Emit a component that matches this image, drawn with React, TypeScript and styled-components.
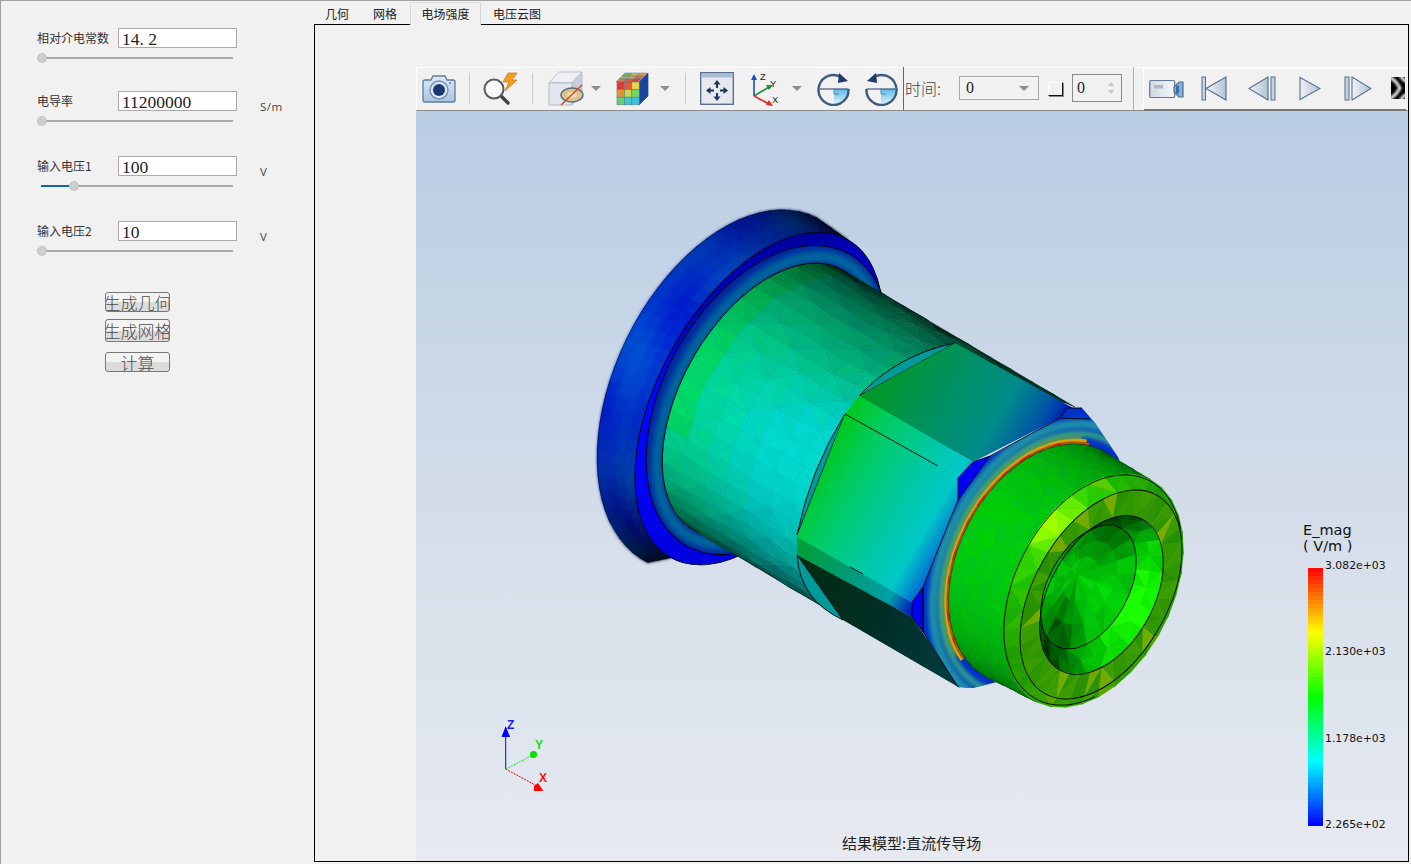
import React from 'react';
import styled, { createGlobalStyle } from 'styled-components';

const Global = createGlobalStyle`
  html, body { margin: 0; padding: 0; height: 100%; background: #f1f1f1; overflow: hidden; }
  #root { height: 100%; }
`;
const CJK = `"Noto Sans CJK SC", "Noto Sans", sans-serif`;
const SERIF = `"Liberation Serif", "Noto Sans CJK SC", serif`;

const Root = styled.div`
  width: 1411px; height: 864px; box-sizing: border-box; display: flex;
  background: #f1f1f1; border-top: 1px solid #a0a0a0; border-left: 1px solid #a0a0a0;
  font-family: ${CJK}; color: #333;
`;
const Panel = styled.div`
  width: 313px; flex: none; box-sizing: border-box; padding: 27px 0 0 36px; display: flex; flex-direction: column;
`;
const Param = styled.div<{ $mt: number }>`
  margin-top: ${p => p.$mt}px; display: grid; grid-template-columns: 81px 119px auto; grid-template-rows: 20px 16px;
  align-items: center; width: 250px;
`;
const Label = styled.span`font-size: 12px; line-height: 20px; color: #333; white-space: nowrap;`;
const Field = styled.input`
  box-sizing: border-box; width: 119px; height: 20px; border: 1px solid #aaa; background: #fff; padding: 2px 3px 0;
  font: 17.5px/18px ${SERIF}; color: #222; outline: none; margin: 0;
`;
const Unit = styled.span`font: 11.5px "Open Sans", sans-serif; color: #444; margin-left: 23px; letter-spacing: .5px; position: relative; top: 5px;`;
const Slider = styled.div`grid-column: 1 / 3; position: relative; height: 16px; width: 196px; display: flex; align-items: center;`;
const Track = styled.div`height: 2px; width: 192px; margin-left: 4px; background: #a8a8a8; margin-top: 4px;`;
const Fill = styled.div`position: absolute; left: 4px; top: 9px; height: 2px; background: #1464b4;`;
const Thumb = styled.div`position: absolute; top: 5px; width: 10px; height: 10px; border-radius: 50%; background: #cdcdcd; border: 1px dotted #bbb; box-sizing: border-box;`;
const Buttons = styled.div`display: flex; flex-direction: column; margin: 35px 0 0 68px; align-items: flex-start;`;
const Btn = styled.div<{ $h: number; $mt: number }>`
  box-sizing: border-box; width: 65px; height: ${p => p.$h}px; margin-top: ${p => p.$mt}px; border: 1px solid #777; border-radius: 3px;
  background: linear-gradient(#f3f3f3 0 50%, #dcdcdc 50% 100%); display: flex; justify-content: center; align-items: center;
  overflow: hidden; white-space: nowrap; font: 300 17px/1 ${CJK}; color: #4c4c4c; flex: none;
`;
const Right = styled.div`flex: 1; display: flex; flex-direction: column; margin: 1px 2px 2px 0; min-width: 0;`;
const Tabs = styled.div`display: flex; height: 22px; margin-left: -1px; position: relative; z-index: 1;`;
const Tab = styled.div<{ $active?: boolean }>`
  box-sizing: border-box; padding: 0 ${p => (p.$active ? 10.5 : 12)}px; height: ${p => (p.$active ? 23 : 22)}px; font-size: 12px; line-height: 24px; color: #222;
  margin-left: ${p => (p.$active ? 1 : 0)}px;
  ${p => p.$active ? 'border: 1px solid #d9d9d9; border-bottom: none; background: #f1f1f1; line-height: 22px;' : ''}
`;
const Frame = styled.div`
  flex: 1; border: 1px solid #000; padding: 42px 0 0 101px; display: flex; flex-direction: column; min-height: 0;
`;
const Toolbar = styled.div`
  height: 44px; flex: none; display: flex; align-items: stretch; box-sizing: border-box; padding-bottom: 1px;
  border-top: 1px solid #fff; border-left: 1px solid #fff; border-bottom: 1px solid #8a8a8a; background: #f1f1f1; position: relative;
`;
const Slot = styled.div<{ $w: number; $ml?: number }>`
  width: ${p => p.$w}px; margin-left: ${p => p.$ml ?? 0}px; flex: none; display: flex; align-items: center; justify-content: center;
`;
const Sep = styled.div<{ $ml: number; $mr: number }>`
  width: 1px; flex: none; margin: 5px ${p => p.$mr}px 5px ${p => p.$ml}px; background: #c8c8c8;
`;
const Divider = styled.div<{ $c: string; $ml: number; $mr: number }>`
  width: 1px; flex: none; background: ${p => p.$c}; margin: -1px ${p => p.$mr}px -1px ${p => p.$ml}px;
`;
const TimeLabel = styled.span`font: 300 16px/40px ${CJK}; color: #444; margin-left: 1px; width: 54px; flex: none; white-space: nowrap;`;
const Combo = styled.div`
  box-sizing: border-box; width: 80px; height: 24px; margin-top: 8px; border: 1px solid #a8a8a8; flex: none; display: flex; align-items: center;
  justify-content: space-between; padding: 0 9px 0 6px; font: 16px ${SERIF}; color: #222;
`;
const Caret = styled.div`width: 0; height: 0; border-left: 5px solid transparent; border-right: 5px solid transparent; border-top: 5px solid #8c8c8c;`;
const Mini = styled.div`
  box-sizing: border-box; width: 15px; height: 14px; margin: 14px 0 0 9px; flex: none;
  border-right: 1px solid #111; border-bottom: 1px solid #111; border-left: 1px solid #fff; border-top: 1px solid #fff;
  box-shadow: 1px 1px 0 #8a8a8a;
`;
const Spin = styled.div`
  box-sizing: border-box; width: 50px; height: 28px; margin: 6px 0 0 9px; border: 1px solid #8a8a8a; flex: none; display: flex; align-items: center;
  justify-content: space-between; padding: 0 7px 0 4px; font: 16px ${SERIF}; color: #222;
`;
const SpinArrows = styled.div`display: flex; flex-direction: column; gap: 4px;`;
const Tri = styled.div<{ $up?: boolean }>`
  width: 0; height: 0; border-left: 3px solid transparent; border-right: 3px solid transparent;
  ${p => p.$up ? 'border-bottom: 4px solid #c4c4c4;' : 'border-top: 4px solid #c4c4c4;'}
`;
const Player = styled.div`
  flex: 1; display: flex; align-items: center; box-sizing: border-box; margin-right: 2px; border-left: 1px solid #fff; border-top: 1px solid #fff;
  border-bottom: 2px solid #777; margin-bottom: -2px; padding-bottom: 2px; overflow: hidden;
`;
const Canvas = styled.div`
  flex: 1; position: relative; overflow: hidden; background: linear-gradient(#b9cde3 0%, #d3dde9 52%, #e7eaf0 100%);
`;
const Model = styled.svg`position: absolute; left: 0; top: 0;`;
const Gizmo = styled.svg`position: absolute; left: 80px; top: 600px;`;
const Legend = styled.div`position: absolute; left: 887px; top: 411px; color: #111;`;
const LegendTitle = styled.div`font: 14.5px/16px "DejaVu Sans", sans-serif; white-space: pre; margin-bottom: 5px;`;
const LegendBody = styled.div`display: flex; margin-left: 5px;`;
const Bar = styled.svg`margin-top: 9px; flex: none; display: block;`;
const Ticks = styled.div`height: 273px; margin-left: 2px; display: flex; flex-direction: column; justify-content: space-between; font: 10.85px/14px "DejaVu Sans", sans-serif; color: #111;`;
const Caption = styled.div`position: absolute; left: 426px; top: 722px; font-size: 15px; line-height: 20px; color: #222; white-space: nowrap;`;

/* ---------- model geometry ---------- */
type E = { cx: number; cy: number; a: number; b: number; th: number };
type Tri3 = { p: string; f: string };
const D2R = Math.PI / 180;
const pt = (e: E, phi: number): [number, number] => {
  const t = e.th * D2R, f = phi * D2R;
  const x = e.a * Math.cos(f), y = e.b * Math.sin(f);
  return [e.cx + x * Math.cos(t) - y * Math.sin(t), e.cy + x * Math.sin(t) + y * Math.cos(t)];
};
const lerpE = (p: E, q: E, u: number): E => ({
  cx: p.cx + (q.cx - p.cx) * u, cy: p.cy + (q.cy - p.cy) * u, a: p.a + (q.a - p.a) * u, b: p.b + (q.b - p.b) * u, th: p.th + (q.th - p.th) * u,
});
const scaleE = (e: E, s: number): E => ({ ...e, a: e.a * s, b: e.b * s });
const h = (i: number, j: number, k = 0) => { const x = Math.sin(i * 127.1 + j * 311.7 + k * 74.7) * 43758.5453; return x - Math.floor(x); };
const clamp01 = (x: number) => Math.max(0, Math.min(1, x));
const jet = (t: number): [number, number, number] => {
  const c = clamp01(t) * 4, seg = Math.min(3, Math.floor(c)), f = c - seg;
  if (seg === 0) return [0, 255 * f, 255];
  if (seg === 1) return [0, 255, 255 * (1 - f)];
  if (seg === 2) return [255 * f, 255, 0];
  return [255, 255 * (1 - f), 0];
};
const col = (t: number, br: number) => { const [r, g, b] = jet(t); const q = Math.min(1, br); return `rgb(${Math.round(r * q)},${Math.round(g * q)},${Math.round(b * q)})`; };
const angDist = (a: number, c: number) => { const d = Math.abs(a - c) % 360; return d > 180 ? 360 - d : d; };
const bump = (a: number, c: number, w: number) => { const d = angDist(a, c); return d < w ? 1 - d / w : 0; };
const mesh = (e0: E, e1: E, nu: number, nv: number, p0: number, p1: number, jit: number, fn: (u: number, s: number, r: number) => string): Tri3[] => {
  const g: [number, number][][] = [];
  for (let i = 0; i <= nu; i++) {
    const row: [number, number][] = [];
    const e = lerpE(e0, e1, i / nu);
    for (let j = 0; j <= nv; j++) {
      const [x, y] = pt(e, p0 + (p1 - p0) * j / nv);
      const edge = i === 0 || i === nu || j === 0 || j === nv;
      row.push(edge ? [x, y] : [x + (h(i, j, 1) - .5) * jit, y + (h(i, j, 2) - .5) * jit]);
    }
    g.push(row);
  }
  const out: Tri3[] = [];
  const P = (a: [number, number]) => `${a[0].toFixed(1)},${a[1].toFixed(1)}`;
  for (let i = 0; i < nu; i++) for (let j = 0; j < nv; j++) {
    const flip = (i + j) % 2 === 0;
    const a = g[i][j], b = g[i + 1][j], c = g[i + 1][j + 1], d = g[i][j + 1];
    const T = flip ? [[a, b, c], [a, c, d]] : [[a, b, d], [b, c, d]];
    T.forEach((t, k) => {
      const u = (i + .5 + (k ? -.15 : .15)) / nu, s = (j + .5 + (k ? .15 : -.15)) / nv;
      out.push({ p: t.map(P).join(' '), f: fn(u, s, h(i, j, k + 5)) });
    });
  }
  return out;
};
const arc = (e: E, p0: number, p1: number) => {
  const pts: string[] = [];
  for (let k = 0; k <= 60; k++) { const [x, y] = pt(e, p0 + (p1 - p0) * k / 60); pts.push(`${x.toFixed(1)},${y.toFixed(1)}`); }
  return pts.join(' ');
};

const F: E = { cx: 732, cy: 390, a: 192, b: 117, th: -64 };
const R1: E = { cx: 759, cy: 398.5, a: 182, b: 100, th: -61 };
const R2: E = { cx: 768, cy: 400, a: 167, b: 104, th: -61 };
const D: E = { cx: 768, cy: 400, a: 150, b: 86, th: -60 };
const D1: E = { cx: 1000, cy: 537, a: 150, b: 86, th: -60 };
const S: E = { cx: 1045, cy: 564, a: 127, b: 86, th: -63 };
const A2: E = { cx: 1093, cy: 590.5, a: 125, b: 79, th: -63 };
const A: E = { cx: 1093, cy: 590, a: 123, b: 78, th: -63 };
const B: E = { cx: 1101, cy: 594.5, a: 114, b: 67, th: -60.5 };
const C: E = { cx: 1101.5, cy: 595, a: 86, b: 52, th: -61 };
const Eb: E = { cx: 1088.5, cy: 587, a: 67, b: 40, th: -61 };
const Apex: E = { cx: 1077, cy: 575, a: 2, b: 2, th: -61 };

const flangeMesh = mesh(F, R1, 4, 40, 180, 360, 0, (u, s) => {
  const sn = Math.pow(Math.sin(Math.PI * s), .8);
  const wob = .5 + .5 * Math.sin(s * 21 + u * 3) * Math.cos(s * 8 - u * 2);
  return col(.035 + wob * .06, .08 + .74 * sn);
});
const bodyMesh = mesh(D, D1, 11, 24, 180, 360, 3.5, (u, s, r) => {
  const sn = Math.pow(Math.sin(Math.PI * Math.pow(s, .85)), 1.0);
  const edge = u < .06 && s > .32 ? .05 : 0;
  const f = clamp01((.66 - s) / .2);
  const toNut = f * Math.max(0, u - .1) * .22;
  const t = Math.max(.262, .33 - toNut + edge + (r - .5) * .016);
  return col(t, .11 + .74 * sn + (r - .5) * .025);
});
const tailMesh = mesh(S, A2, 6, 30, 180, 360, 2, (u, s, r) => {
  const sn = Math.pow(Math.sin(Math.PI * s), .6);
  const t = .48 + (r - .5) * .025;
  return col(t, .3 + .5 * sn + (r - .5) * .04);
});
const ringAB = mesh(A2, B, 1, 34, 0, 360, 0, (u, s, r) => {
  const a = s * 360;
  const lime = bump(a, 289, 70);
  const peak = bump(a, 289, 24);
  const olive = bump(a, 150, 70);
  const t = .55 + olive * .035 + peak * .11 + (r - .5) * .03 + (r > .9 ? .05 : 0);
  return col(t, .62 + lime * .3 + peak * .1 + (r - .5) * .06);
});
const ringBC = mesh(B, C, 1, 34, 0, 360, 0, (u, s, r) => {
  const spot = r > .86 ? .07 : 0;
  const t = .585 + (r - .5) * .035 + spot;
  return col(t, .6 + (r - .5) * .07 + spot * .6);
});
const wall = mesh(C, Eb, 2, 26, 0, 360, 0, (u, s, r) => {
  const a = s * 360;
  const lit = bump(a, 85, 85);
  const dark = Math.max(bump(a, 200, 55), bump(a, 333, 55));
  return col(.49 + lit * .035 + (r - .5) * .02, .62 + lit * .42 - dark * .4 + (r - .5) * .12);
});
const back = mesh(Eb, Apex, 3, 18, 0, 360, 0, (u, s, r) => {
  const a = s * 360;
  const rim = 1 - u;
  return col(.49, .74 + bump(a, 90, 60) * .08 - rim * (bump(a, 345, 70) * .42 + bump(a, 185, 55) * .5) + (r - .5) * .12);
});

const Tris = ({ t }: { t: Tri3[] }) => <g>{t.map((x, i) => <polygon key={i} points={x.p} fill={x.f} stroke={x.f} strokeWidth={0.5} />)}</g>;
const Oval = ({ e, ...rest }: { e: E } & React.SVGProps<SVGEllipseElement>) => (
  <ellipse cx={e.cx} cy={e.cy} rx={e.a} ry={e.b} transform={`rotate(${e.th} ${e.cx} ${e.cy})`} {...rest} />
);
const HEX = '1060,418 1067,408 1082,408 1095,423 1118,457 1135,500 1100,650 997,682 973,688 958,687 923,632 912,617 912,602 923,587 958,500 958,478 973,462 993,455';

const ModelArt = () => (
  <Model width={992} height={750} viewBox="416 111 992 750">
    <defs>
      <filter id="b07"><feGaussianBlur stdDeviation=".7" /></filter>
      <filter id="b1" x="-5%" y="-5%" width="110%" height="110%"><feGaussianBlur stdDeviation="1.6" /></filter>
      <filter id="b2"><feGaussianBlur stdDeviation="2" /></filter>
      <filter id="b4"><feGaussianBlur stdDeviation="4" /></filter>
      <linearGradient id="band" gradientUnits="userSpaceOnUse" x1="640" y1="480" x2="880" y2="270">
        <stop offset="0" stopColor="#0000e0" /><stop offset=".5" stopColor="#0008ff" /><stop offset=".85" stopColor="#0000b8" /><stop offset="1" stopColor="#000078" />
      </linearGradient>
      <linearGradient id="topF" gradientUnits="userSpaceOnUse" x1="870" y1="365" x2="1045" y2="465">
        <stop offset="0" stopColor="#009a18" /><stop offset=".35" stopColor="#00925a" /><stop offset=".68" stopColor="#008c8a" /><stop offset=".88" stopColor="#0050a8" /><stop offset="1" stopColor="#0000c4" />
      </linearGradient>
      <linearGradient id="midF" gradientUnits="userSpaceOnUse" x1="815" y1="465" x2="965" y2="552">
        <stop offset="0" stopColor="#00c818" /><stop offset=".22" stopColor="#00cc60" /><stop offset=".55" stopColor="#00c8a8" /><stop offset=".74" stopColor="#00c8c8" /><stop offset=".88" stopColor="#0070d4" /><stop offset="1" stopColor="#0000e6" />
      </linearGradient>
      <linearGradient id="lowB" gradientUnits="userSpaceOnUse" x1="797" y1="540" x2="918" y2="610">
        <stop offset="0" stopColor="#00a030" /><stop offset=".4" stopColor="#009a70" /><stop offset=".78" stopColor="#00a0a8" /><stop offset="1" stopColor="#0000c0" />
      </linearGradient>
      <linearGradient id="lowD" gradientUnits="userSpaceOnUse" x1="810" y1="570" x2="950" y2="660">
        <stop offset="0" stopColor="#002a12" /><stop offset=".6" stopColor="#00302a" /><stop offset="1" stopColor="#003a3c" />
      </linearGradient>
      <clipPath id="annulus"><Oval e={R2} /></clipPath>
      <clipPath id="hexc"><polygon points={HEX} /></clipPath>
    </defs>

    <Tris t={flangeMesh} />
    <g filter="url(#b1)"><Tris t={flangeMesh} /></g>
    <polyline points={arc(F, 205, 345)} fill="none" stroke="#000" strokeOpacity=".55" strokeWidth="1" />
    <Oval e={R1} fill="url(#band)" />
    <Oval e={R1} fill="none" stroke="#000" strokeWidth=".9" />
    <Oval e={R2} fill="#0024a0" />
    <g clipPath="url(#annulus)">
      <Oval e={scaleE(D, 1.05)} fill="none" stroke="#009698" strokeOpacity=".85" strokeWidth="8" filter="url(#b4)" />
    </g>
    <Oval e={R2} fill="none" stroke="#000" strokeWidth=".9" />
    <Tris t={bodyMesh} />
    <polyline points={arc(D, 176, 372)} fill="none" stroke="#000" strokeWidth="1" />

    <path d="M859 396 Q897 355 955 343 L859 396Z" fill="#009a9a" stroke="#000" strokeWidth=".9" />
    <path d="M845 414 Q810 470 797 535 Z" fill="#009a9a" stroke="#000" strokeWidth=".9" />
    <path d="M797 555 Q800 600 843 620 Z" fill="#009a9a" stroke="#000" strokeWidth=".9" />
    <polygon points="955,343 1073,408 1060,418 973,462 859,396" fill="url(#topF)" />
    <polygon points="859,396 973,462 958,478 958,500 923,587 912,602 797,537 845,414" fill="url(#midF)" />
    <line x1="845" y1="414" x2="938" y2="466" stroke="#000" strokeWidth=".9" />
    <polygon points="797,537 912,602 912,617 797,555" fill="url(#lowB)" />
    <polygon points="797,555 912,617 960,688 843,620" fill="url(#lowD)" />
    <line x1="850" y1="567" x2="863" y2="574" stroke="#000" strokeWidth=".9" />

    <polygon points={HEX} fill="#0030c8" />
    <g clipPath="url(#hexc)">
      <Oval e={scaleE(S, 1.17)} fill="none" stroke="#1c90a8" strokeWidth="9" filter="url(#b2)" />
      <Oval e={scaleE(S, 1.09)} fill="none" stroke="#30a880" strokeWidth="6" filter="url(#b2)" />
      <polyline points={arc(scaleE(S, 1.05), 205, 345)} fill="none" stroke="#80b030" strokeWidth="4" filter="url(#b2)" />
      <polyline points={arc(scaleE(S, 1.03), 200, 348)} fill="none" stroke="#d0a800" strokeWidth="4" filter="url(#b07)" />
      <polyline points={arc(scaleE(S, 1.012), 200, 350)} fill="none" stroke="#b85000" strokeWidth="3" filter="url(#b07)" />
      <polyline points={arc(scaleE(S, 1.015), 210, 340)} fill="none" stroke="#d82000" strokeWidth="2.5" strokeDasharray="7 16 12 26" filter="url(#b07)" />
    </g>
    <polygon points="973,462 958,478 958,500 990,456" fill="#0000f4" stroke="#000" strokeWidth=".8" />
    <polygon points="912,602 923,587 923,632 912,617" fill="#0000f4" stroke="#000" strokeWidth=".8" />
    <polyline points="958,500 923,587 923,632 958,687" fill="none" stroke="#000" strokeWidth=".9" />
    <polyline points="990,456 1060,418 1067,408 1082,408" fill="none" stroke="#000" strokeWidth=".9" />
    <line x1="1060" y1="418" x2="1090" y2="419" stroke="#000" strokeWidth=".9" />
    <Oval e={S} fill="#00b000" stroke="#111" strokeWidth="1.2" />
    <Tris t={tailMesh} />
    <Tris t={ringAB} />
    <polyline points={arc(A, 140, 400)} fill="none" stroke="#000" strokeWidth=".9" />
    <Tris t={ringBC} />
    <Oval e={B} fill="none" stroke="#000" strokeWidth=".9" />
    <Tris t={wall} />
    <Tris t={back} />
    <Oval e={C} fill="none" stroke="#000" strokeWidth=".9" />
    <Oval e={Eb} fill="none" stroke="#000" strokeWidth=".9" />
  </Model>
);

const GizmoArt = () => (
  <Gizmo width={70} height={80} viewBox="496 711 70 80">
    <line x1="505.7" y1="769" x2="505.7" y2="733" stroke="#0000ff" strokeWidth="1" />
    <polygon points="505.7,726 510,737 501.5,737" fill="#0000ff" />
    <line x1="505.7" y1="769" x2="533" y2="755" stroke="#00ff00" strokeWidth="1" strokeDasharray="2 1" />
    <circle cx="533.5" cy="754.5" r="3.5" fill="#00e000" />
    <line x1="505.7" y1="769" x2="537" y2="786" stroke="#ff0000" strokeWidth="1" strokeDasharray="2 1" />
    <polygon points="534,786 538,783 544,792 534,791" fill="#ff0000" />
    <text x="507" y="729" fontFamily="Liberation Sans" fontSize="12" fontWeight="700" fill="#1818ff">Z</text>
    <text x="535" y="749" fontFamily="Liberation Sans" fontSize="12" fontWeight="700" fill="#10e010">Y</text>
    <text x="539" y="782" fontFamily="Liberation Sans" fontSize="12" fontWeight="700" fill="#ff1010">X</text>
  </Gizmo>
);

const legendRects = Array.from({ length: 64 }, (_, i) => {
  const t = 1 - (i + .5) / 64; const [r, g, b] = jet(t);
  return <rect key={i} x={0} y={i * 258 / 64} width={15} height={258 / 64 + .5} fill={`rgb(${Math.round(r)},${Math.round(g)},${Math.round(b)})`} />;
});

/* ---------- toolbar icons ---------- */
const Ico = ({ w, h: ht, children }: { w: number; h: number; children: React.ReactNode }) => (
  <svg width={w} height={ht} viewBox={`0 0 ${w} ${ht}`}>{children}</svg>
);
const CameraIco = () => (
  <Ico w={34} h={30}>
    <defs><linearGradient id="cam" x1="0" y1="0" x2="0" y2="1"><stop offset="0" stopColor="#dfe9f3" /><stop offset="1" stopColor="#a9c4de" /></linearGradient></defs>
    <path d="M9 6 L11 2 H23 L25 6 H31 Q33 6 33 8 V26 Q33 28 31 28 H3 Q1 28 1 26 V8 Q1 6 3 6Z" fill="url(#cam)" stroke="#5a7ba3" strokeWidth="1.3" />
    <circle cx="17" cy="16" r="9" fill="#dbe6f1" stroke="#6f90b5" strokeWidth="1.4" />
    <circle cx="17" cy="16" r="6" fill="#1b386e" />
    <circle cx="28" cy="9" r="1" fill="#5a7ba3" />
  </Ico>
);
const SearchIco = () => (
  <Ico w={38} h={34}>
    <polygon points="26,1 35,1 30,8 35,8 23,19 27,10 21,10" fill="#f0a020" stroke="#c87010" strokeWidth=".7" />
    <line x1="18" y1="23" x2="26" y2="31" stroke="#444" strokeWidth="3.5" strokeLinecap="round" />
    <circle cx="12" cy="17" r="9.5" fill="#f6f8fa" stroke="#5a5a5a" strokeWidth="2" />
  </Ico>
);
const CubeIco = () => (
  <Ico w={36} h={35}>
    <polygon points="1,12 11,1 34,1 24,12" fill="#eef0f4" stroke="#b8c0cc" />
    <polygon points="24,12 34,1 34,24 24,34" fill="#c8ced8" stroke="#b8c0cc" />
    <polygon points="1,12 24,12 24,34 1,34" fill="#e4e8ee" stroke="#aeb8c6" />
    <ellipse cx="24" cy="24" rx="11" ry="7" fill="#dbc48c" stroke="#5c6c80" strokeWidth="1.4" />
    <ellipse cx="24" cy="24" rx="5" ry="3" fill="#eee0b0" />
    <line x1="13" y1="34" x2="34" y2="14" stroke="#d84820" strokeWidth="1.4" />
  </Ico>
);
const heat = ['#e03830', '#e85a30', '#e8d840', '#e89030', '#c8d848', '#70d860', '#60d070', '#40c8c8', '#40c0e0'];
const topHeat = ['#70b870', '#c0c060', '#e0a050', '#a0b868', '#e0a050', '#e06848', '#d88050', '#e05848', '#d84040'];
const HeatIco = () => (
  <Ico w={33} h={34}>
    {topHeat.map((c, i) => {
      const r = Math.floor(i / 3), q = i % 3;
      const x0 = 9 - r * 3 + q * 7.3, y0 = 1 + r * 3;
      return <polygon key={i} points={`${x0},${y0} ${x0 + 7.3},${y0} ${x0 + 4.3},${y0 + 3} ${x0 - 3},${y0 + 3}`} fill={c} stroke="#5a7a90" strokeWidth=".5" />;
    })}
    <polygon points="23,10 32,1 32,24 23,33" fill="#1846a0" stroke="#2a4a80" strokeWidth=".7" />
    {heat.map((c, i) => <rect key={i} x={1 + (i % 3) * 7.4} y={10 + Math.floor(i / 3) * 7.6} width={7.4} height={7.6} fill={c} stroke="#5a7a90" strokeWidth=".6" />)}
  </Ico>
);
const WinIco = () => (
  <Ico w={34} h={33}>
    <rect x=".7" y=".7" width="32.6" height="31.6" fill="#e6eaf0" stroke="#5b6f8c" strokeWidth="1.4" />
    <rect x="1.5" y="1.5" width="31" height="4" fill="#a9bbd0" />
    <g fill="#1d3556">
      <polygon points="17,8 13.5,12.5 20.5,12.5" /><rect x="16" y="12" width="2" height="4" />
      <polygon points="17,29 13.5,24.5 20.5,24.5" /><rect x="16" y="21" width="2" height="4" />
      <polygon points="6,18.5 10.5,15 10.5,22" /><rect x="10" y="17.5" width="4" height="2" />
      <polygon points="28,18.5 23.5,15 23.5,22" /><rect x="20" y="17.5" width="4" height="2" />
    </g>
  </Ico>
);
const AxesIco = () => (
  <Ico w={36} h={34}>
    <line x1="6" y1="24" x2="6" y2="7" stroke="#2050b0" strokeWidth="1.6" /><polygon points="6,2 3,8 9,8" fill="#2050b0" />
    <line x1="6" y1="24" x2="21" y2="15" stroke="#209040" strokeWidth="1.6" /><polygon points="25,13 18,13 21,18" fill="#209040" />
    <line x1="6" y1="24" x2="21" y2="32" stroke="#e02830" strokeWidth="1.6" /><polygon points="25,34 18,33 21,28" fill="#e02830" />
    <text x="12" y="8" fontFamily="Liberation Sans" fontSize="9.5" fill="#222">Z</text>
    <text x="22" y="15" fontFamily="Liberation Sans" fontSize="9.5" fill="#222">Y</text>
    <text x="24" y="31" fontFamily="Liberation Sans" fontSize="9.5" fill="#222">X</text>
  </Ico>
);
const RotIco = ({ flip }: { flip?: boolean }) => (
  <Ico w={34} h={34}>
    <defs><linearGradient id={flip ? 'qb' : 'qa'} x1="0" y1="0" x2="0" y2="1"><stop offset="0" stopColor="#5cb8ee" /><stop offset="1" stopColor="#d6effb" /></linearGradient></defs>
    <g transform={flip ? 'translate(34 0) scale(-1 1)' : undefined}>
      {flip
        ? <path d="M17 17 H2.5 A15 15 0 0 0 17 31.5 Z" fill="url(#qb)" />
        : <path d="M17 17 H31.5 A15 15 0 0 1 17 31.5 Z" fill="url(#qa)" />}
      <path d="M24 5 A15 15 0 1 0 31.5 17" fill="none" stroke="#3c5a7e" strokeWidth="2.4" />
      <polygon points="31,9 22,1 21,11" fill="#1f3d66" />
      <line x1="2.5" y1="17" x2="31.5" y2="17" stroke="#3c5a7e" strokeWidth="1.2" />
      {flip
        ? <path d="M17 17 V22 H12" fill="none" stroke="#4f86b0" strokeWidth="1" />
        : <path d="M17 17 V22 H22" fill="none" stroke="#4f86b0" strokeWidth="1" />}
    </g>
  </Ico>
);
const VideoIco = () => (
  <Ico w={35} h={19}>
    <defs><linearGradient id="vid" x1="0" y1="0" x2="1" y2="0"><stop offset="0" stopColor="#cfd8e4" /><stop offset="1" stopColor="#f6f8fb" /></linearGradient></defs>
    <rect x=".7" y="1.5" width="25" height="17" rx="1.5" fill="url(#vid)" stroke="#5f7896" strokeWidth="1.2" />
    <rect x="5" y="6" width="9" height="3.5" fill="#aeb9c8" />
    <polygon points="25,8 30,3 34,3 34,18 30,18 25,13" fill="#7fb4d8" stroke="#4d6f96" strokeWidth="1.2" />
    <rect x="27" y="6.5" width="3" height="8" fill="#3d6f9a" />
  </Ico>
);
const tg = (id: string) => <defs><linearGradient id={id} x1="0" y1="0" x2="1" y2="0"><stop offset="0" stopColor="#f0f3f7" /><stop offset="1" stopColor="#b5c1d0" /></linearGradient></defs>;
const FirstIco = () => (<Ico w={26} h={25}>{tg('m1')}<rect x="1" y="1" width="3.5" height="23" fill="#c9d3e0" stroke="#4f6f96" /><polygon points="5,12.5 25,1 25,24" fill="url(#m1)" stroke="#54708f" strokeWidth="1.1" /></Ico>);
const PrevIco = () => (<Ico w={28} h={25}>{tg('m2')}<polygon points="1,12.5 20,1 20,24" fill="url(#m2)" stroke="#54708f" strokeWidth="1.1" /><rect x="23" y="1" width="4" height="23" fill="#c9d3e0" stroke="#54708f" /></Ico>);
const PlayIco = () => (<Ico w={22} h={25}>{tg('m3')}<polygon points="1,1.5 21,12.5 1,23.5" fill="url(#m3)" stroke="#54708f" strokeWidth="1.1" /></Ico>);
const NextIco = () => (<Ico w={28} h={25}>{tg('m4')}<rect x="1" y="1" width="4" height="23" fill="#c9d3e0" stroke="#54708f" /><polygon points="8,1 27,12.5 8,24" fill="url(#m4)" stroke="#54708f" strokeWidth="1.1" /></Ico>);
const MoreIco = () => (
  <Ico w={14} h={22}>
    <defs><filter id="mb"><feGaussianBlur stdDeviation=".8" /></filter></defs>
    <rect width="14" height="22" fill="#000" />
    <g filter="url(#mb)">
      <path d="M-1 0 L5 5 L9 11 L5 17 L-1 22" fill="none" stroke="#f0f0f0" strokeWidth="3" />
      <path d="M9 -1 L15 5 M15 17 L9 23" stroke="#f0f0f0" strokeWidth="3" />
    </g>
  </Ico>
);

const params = [
  { label: '相对介电常数', value: '14. 2', unit: '', mt: 0, pos: 0 },
  { label: '电导率', value: '11200000', unit: 'S/m', mt: 27, pos: 0 },
  { label: '输入电压1', value: '100', unit: 'V', mt: 29, pos: 32 },
  { label: '输入电压2', value: '10', unit: 'V', mt: 29, pos: 0 },
];

export default function App() {
  return (
    <Root>
      <Global />
      <Panel>
        {params.map(p => (
          <Param key={p.label} $mt={p.mt}>
            <Label>{p.label}</Label>
            <Field readOnly value={p.value} />
            <Unit>{p.unit}</Unit>
            <Slider>
              <Track />
              {p.pos > 0 && <Fill style={{ width: p.pos }} />}
              <Thumb style={{ left: p.pos }} />
            </Slider>
          </Param>
        ))}
        <Buttons>
          <Btn $h={20} $mt={0}>生成几何</Btn>
          <Btn $h={23} $mt={7}>生成网格</Btn>
          <Btn $h={20} $mt={10}>计算</Btn>
        </Buttons>
      </Panel>
      <Right>
        <Tabs>
          <Tab>几何</Tab>
          <Tab>网格</Tab>
          <Tab $active>电场强度</Tab>
          <Tab>电压云图</Tab>
        </Tabs>
        <Frame>
          <Toolbar>
            <Slot $w={44}><CameraIco /></Slot>
            <Sep $ml={8} $mr={9} />
            <Slot $w={44}><SearchIco /></Slot>
            <Sep $ml={9} $mr={11} />
            <Slot $w={44}><CubeIco /></Slot>
            <Slot $w={16}><Caret /></Slot>
            <Slot $w={44} $ml={6}><HeatIco /></Slot>
            <Slot $w={16} $ml={3}><Caret /></Slot>
            <Sep $ml={12} $mr={9} />
            <Slot $w={44}><WinIco /></Slot>
            <Slot $w={44} $ml={5}><AxesIco /></Slot>
            <Slot $w={16} $ml={1}><Caret /></Slot>
            <Slot $w={44} $ml={7}><RotIco /></Slot>
            <Slot $w={44} $ml={3}><RotIco flip /></Slot>
            <Divider $c="#666" $ml={0} $mr={0} />
            <TimeLabel>时间:</TimeLabel>
            <Combo>0<Caret /></Combo>
            <Mini />
            <Spin>0<SpinArrows><Tri $up /><Tri /></SpinArrows></Spin>
            <Divider $c="#b0b0b0" $ml={11} $mr={9} />
            <Player>
              <Slot $w={44}><VideoIco /></Slot>
              <Slot $w={48} $ml={2}><FirstIco /></Slot>
              <Slot $w={48}><PrevIco /></Slot>
              <Slot $w={48}><PlayIco /></Slot>
              <Slot $w={48}><NextIco /></Slot>
              <Slot $w={14} $ml={9}><MoreIco /></Slot>
            </Player>
          </Toolbar>
          <Canvas>
            <ModelArt />
            <GizmoArt />
            <Legend>
              <LegendTitle>{'E_mag\n( V/m )'}</LegendTitle>
              <LegendBody>
                <Bar width={15} height={258} viewBox="0 0 15 258">{legendRects}</Bar>
                <Ticks><span>3.082e+03</span><span>2.130e+03</span><span>1.178e+03</span><span>2.265e+02</span></Ticks>
              </LegendBody>
            </Legend>
            <Caption>结果模型:直流传导场</Caption>
          </Canvas>
        </Frame>
      </Right>
    </Root>
  );
}
